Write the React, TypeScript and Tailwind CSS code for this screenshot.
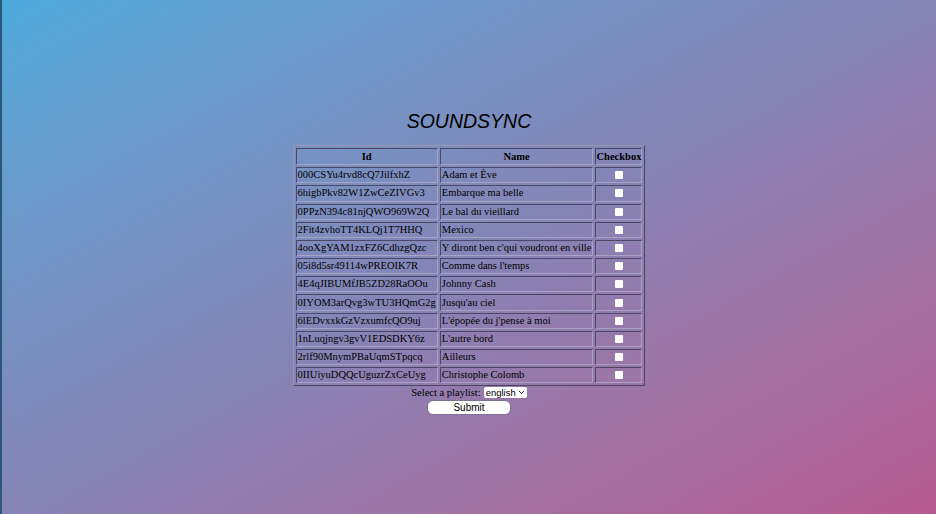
import { useState } from "react";

interface Track {
  id: string;
  name: string;
}

const tracks: Track[] = [
  { id: "000CSYu4rvd8cQ7JilfxhZ", name: "Adam et Ève" },
  { id: "6higbPkv82W1ZwCeZIVGv3", name: "Embarque ma belle" },
  { id: "0PPzN394c81njQWO969W2Q", name: "Le bal du vieillard" },
  { id: "2Fit4zvhoTT4KLQj1T7HHQ", name: "Mexico" },
  { id: "4ooXgYAM1zxFZ6CdhzgQzc", name: "Y diront ben c'qui voudront en ville" },
  { id: "05i8d5sr49114wPREOIK7R", name: "Comme dans l'temps" },
  { id: "4E4qJIBUMfJB5ZD28RaOOu", name: "Johnny Cash" },
  { id: "0IYOM3arQvg3wTU3HQmG2g", name: "Jusqu'au ciel" },
  { id: "6lEDvxxkGzVzxumfcQO9uj", name: "L'épopée du j'pense à moi" },
  { id: "1nLuqjngv3gvV1EDSDKY6z", name: "L'autre bord" },
  { id: "2rlf90MnymPBaUqmSTpqcq", name: "Ailleurs" },
  { id: "0IIUiyuDQQcUguzrZxCeUyg", name: "Christophe Colomb" },
];

export default function App() {
  const [checked, setChecked] = useState<Record<string, boolean>>({});

  return (
    <div className="min-h-screen w-full flex flex-col items-center justify-center border-l-2 border-[#2b5677] bg-linear-to-br from-[#4ba9da] via-[#8584b6] to-[#b65b90] font-['Liberation_Serif',serif] text-[10.5px] leading-[12px] text-black">
      <div className="flex flex-col items-center mt-[13px]">
        {/* Title */}
        <h1 className="font-['Liberation_Sans',Arial,sans-serif] italic text-[19.5px] leading-none mb-[14px]">
          SOUNDSYNC
        </h1>

        {/* Tracks table */}
        <table className="border-separate border-spacing-[2px] border border-t-[#9a96b4] border-l-[#9a96b4] border-b-[#4a4560] border-r-[#4a4560]">
          <thead>
            <tr>
              <th className="w-[141px] h-[17px] p-0 font-bold text-center border border-t-[#4a4866] border-l-[#4a4866] border-b-[#a7a3c4] border-r-[#a7a3c4]">
                Id
              </th>
              <th className="w-[152px] p-0 font-bold text-center border border-t-[#4a4866] border-l-[#4a4866] border-b-[#a7a3c4] border-r-[#a7a3c4]">
                Name
              </th>
              <th className="w-[47px] p-0 font-bold text-center border border-t-[#4a4866] border-l-[#4a4866] border-b-[#a7a3c4] border-r-[#a7a3c4]">
                Checkbox
              </th>
            </tr>
          </thead>
          <tbody>
            {tracks.map((t) => (
              <tr key={t.id}>
                <td className="h-[16.2px] py-0 px-[1px] whitespace-nowrap border border-t-[#4a4866] border-l-[#4a4866] border-b-[#a7a3c4] border-r-[#a7a3c4]">
                  {t.id}
                </td>
                <td className="py-0 px-[1px] whitespace-nowrap border border-t-[#4a4866] border-l-[#4a4866] border-b-[#a7a3c4] border-r-[#a7a3c4]">
                  {t.name}
                </td>
                <td className="p-0 text-center border border-t-[#4a4866] border-l-[#4a4866] border-b-[#a7a3c4] border-r-[#a7a3c4]">
                  <input
                    type="checkbox"
                    checked={!!checked[t.id]}
                    onChange={() => setChecked({ ...checked, [t.id]: !checked[t.id] })}
                    className="appearance-none w-[8px] h-[8px] bg-white rounded-[1px] align-middle block mx-auto"
                  />
                </td>
              </tr>
            ))}
          </tbody>
        </table>

        {/* Playlist form */}
        <div className="flex items-center gap-[3px] mt-[1px] leading-none">
          <span>Select a playlist:</span>
          <div className="flex items-center gap-[2px] bg-white px-[2px] h-[11px] rounded-[2px] font-['Liberation_Sans',Arial,sans-serif] text-[9.5px]">
            english
            <svg width="7" height="5" viewBox="0 0 7 5" fill="none" stroke="#333" strokeWidth="1">
              <path d="M1 1l2.5 2.5L6 1" />
            </svg>
          </div>
        </div>
        <button className="mt-[2px] w-[84px] h-[15px] bg-white rounded-[6px] border border-[#77738f] font-['Liberation_Sans',Arial,sans-serif] text-[10px] leading-none">
          Submit
        </button>
      </div>
    </div>
  );
}
